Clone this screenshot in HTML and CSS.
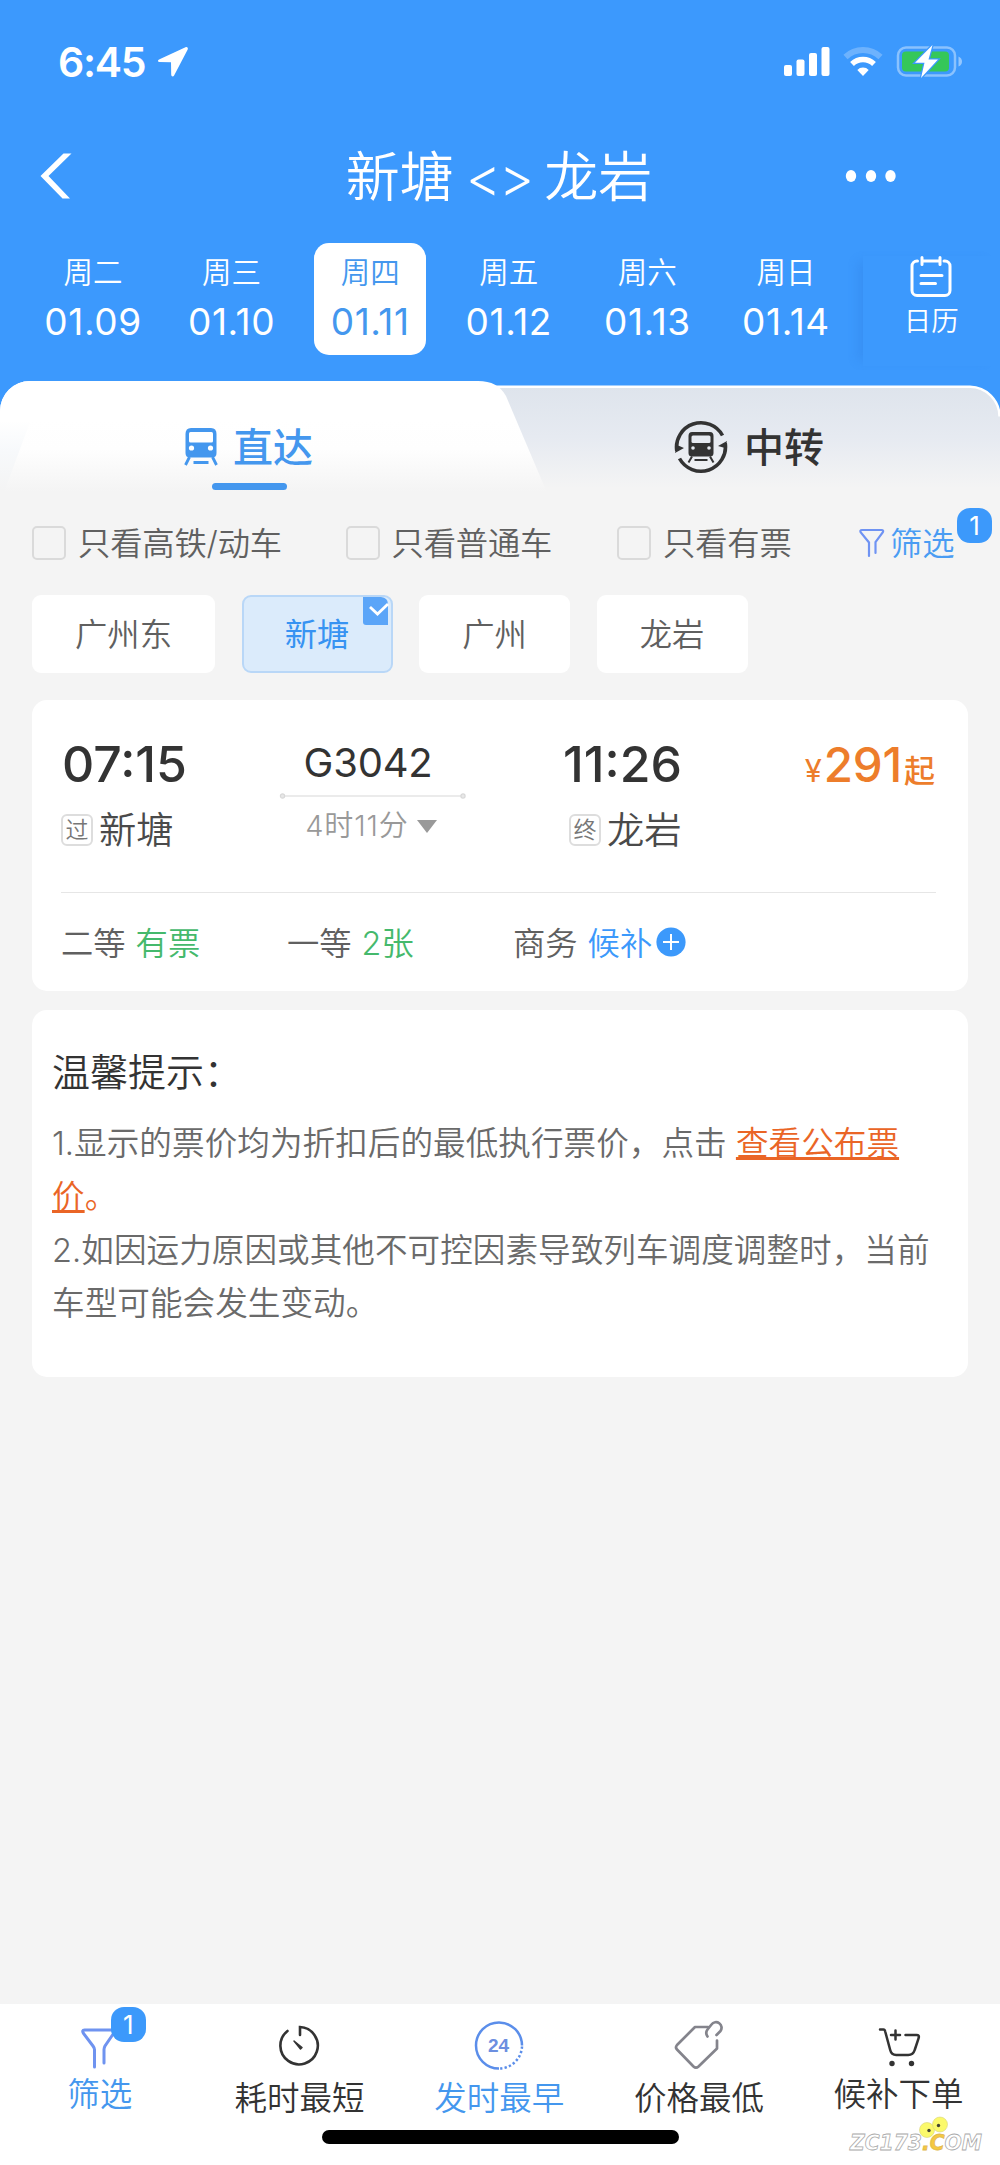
FILE: index.html
```html
<!DOCTYPE html>
<html lang="zh-CN">
<head>
<meta charset="utf-8">
<title>新塘 - 龙岩</title>
<link rel="stylesheet" href="styles.css">
</head>
<body>
<div class="page">
  <header class="header">
    <div class="status">
      <span class="clock">6:45</span>
      <svg class="location" width="32" height="32" viewBox="0 0 32 32"><path d="M28.500 1.200 2 13.400c-1.600.8-1.200 2.400.4 2.500l11.600.3.200 12.300c0 2 2 2.600 2.900.9L30.700 3.400c.7-1.600-.6-2.900-2.200-2.200z" fill="#fff"/></svg>
      <svg class="signals" width="180" height="34" viewBox="0 0 180 34">
        <g fill="#fff">
          <rect x="0" y="20" width="8" height="11" rx="2"/><rect x="12.500" y="14.500" width="8" height="16.500" rx="2"/><rect x="25" y="8" width="8" height="23" rx="2"/><rect x="37.500" y="2" width="8" height="29" rx="2"/>
          <path d="M79 31l-5.700-6a8 8 0 0 1 11.400 0z"/>
        </g>
        <path d="M68 19a16 16 0 0 1 22 0" fill="none" stroke="#fff" stroke-width="5.500"/>
        <path d="M61.500 12a25.500 25.500 0 0 1 35 0" fill="none" stroke="#fff" stroke-opacity=".25" stroke-width="6"/>
        <rect x="114" y="2.500" width="57" height="28" rx="8" fill="none" stroke="#fff" stroke-opacity=".4" stroke-width="2.500"/>
        <path d="M174.500 11.500q3.500 1.500 3.500 5t-3.500 5z" fill="#fff" fill-opacity=".45"/>
        <rect x="118" y="6.500" width="47" height="20" rx="4" fill="#35c759"/>
        <path d="M148.500 0 131 17.800h9.500L137 33l17-18.400h-9.500z" fill="#fff" stroke="#3c99fd" stroke-width="2.500" paint-order="stroke"/>
      </svg>
    </div>
    <div class="nav">
      <svg class="back" width="32" height="48" viewBox="0 0 32 48"><path d="M31.500 1.500h-8L.5 24l22 22.500H30L8.500 24z" fill="#fff"/></svg>
      <h1 class="title"><span>新塘</span><span class="swap">&lt;&gt;</span><span>龙岩</span></h1>
      <svg class="more" width="52" height="14" viewBox="0 0 52 14" fill="#fff"><ellipse cx="6" cy="7" rx="5.200" ry="6"/><ellipse cx="26" cy="7" rx="5.200" ry="6"/><ellipse cx="45.500" cy="7" rx="5.200" ry="6"/></svg>
    </div>
    <div class="dates">
      <div class="day"><span class="week">周二</span><span class="date">01.09</span></div>
      <div class="day"><span class="week">周三</span><span class="date">01.10</span></div>
      <div class="day active"><span class="week">周四</span><span class="date">01.11</span></div>
      <div class="day"><span class="week">周五</span><span class="date">01.12</span></div>
      <div class="day"><span class="week">周六</span><span class="date">01.13</span></div>
      <div class="day"><span class="week">周日</span><span class="date">01.14</span></div>
      <div class="calendar">
        <svg width="42" height="42" viewBox="0 0 42 42" fill="none" stroke="#fff" stroke-width="3" stroke-linecap="round"><path d="M7.500 5H7a5 5 0 0 0-5 5v24.500a5 5 0 0 0 5 5h28a5 5 0 0 0 5-5V10a5 5 0 0 0-5-5h-1M12 5h18M12 1.500v7M30 1.500v7M11 19.500h21M11 27.500h14.500"/></svg>
        <span>日历</span>
      </div>
    </div>
  </header>

  <div class="tabs">
    <svg class="tabs-shape" width="1000" height="125" viewBox="0 0 1000 125">
      <defs>
        <linearGradient id="gray" x1="0" y1="16" x2="0" y2="118" gradientUnits="userSpaceOnUse"><stop offset="0" stop-color="#dee4ec"/><stop offset=".5" stop-color="#e6eaf1"/><stop offset="1" stop-color="#f4f4f4"/></linearGradient>
        <linearGradient id="white" x1="0" y1="50" x2="0" y2="122" gradientUnits="userSpaceOnUse"><stop offset="0" stop-color="#fff"/><stop offset=".4" stop-color="#fefefe"/><stop offset="1" stop-color="#f4f4f4"/></linearGradient>
        <linearGradient id="edge" x1="0" y1="50" x2="0" y2="120" gradientUnits="userSpaceOnUse"><stop offset="0" stop-color="#fff"/><stop offset=".45" stop-color="#f7f9fb"/><stop offset="1" stop-color="#f4f4f4"/></linearGradient>
      </defs>
      <path d="M460 16.500h510a30 30 0 0 1 30 30V125H460z" fill="url(#gray)"/>
      <path d="M480 16.700h490a30 30 0 0 1 29.500 29.800" fill="none" stroke="#fff" stroke-width="2.400"/>
      <path d="M0 41a30 30 0 0 1 30-30h400v114H0z" fill="url(#edge)"/>
      <path d="M0 41a30 30 0 0 1 30-30h448q20 0 28 15l42 99H3l27-73H0z" fill="url(#white)"/>
    </svg>
    <div class="tab-row">
      <div class="tab direct">
        <div class="tab-label">
          <svg width="34" height="40" viewBox="0 0 34 40"><path d="M7 1h20q5.500 0 5.500 6v19q0 4.500-4.500 4.500H6q-4.500 0-4.500-4.500V7Q1.500 1 7 1z" fill="#4497ee"/><rect x="5" y="5" width="24" height="10.500" rx="1.500" fill="#fff"/><circle cx="7.500" cy="21" r="2.600" fill="#fff"/><circle cx="26.500" cy="21" r="2.600" fill="#fff"/><path d="M5.500 30 1.500 38M28.500 30l4 8M9.500 35.500h15" stroke="#4497ee" stroke-width="2.800" fill="none"/></svg>
          <span>直达</span>
        </div>
        <div class="underline"></div>
      </div>
      <div class="tab transfer">
        <div class="tab-label">
          <svg width="54" height="54" viewBox="0 0 54 54"><g fill="none" stroke="#333" stroke-width="3.600"><path d="M2.800 31A24.500 24.500 0 0 1 48.500 15.500M51.200 23A24.500 24.500 0 0 1 5.500 38.500"/></g><path d="M1 33l2-8 7 3zM53 21l-2 7-7-2z" fill="#333"/><path d="M18 12h18q3.500 0 3.500 4v17q0 3.500-3.500 3.500H18q-3.500 0-3.500-3.500V16q0-4 3.500-4z" fill="#333"/><rect x="17.500" y="15.500" width="19" height="7.500" rx="1.500" fill="#e6eaf1"/><circle cx="19" cy="28" r="1.800" fill="#e6eaf1"/><circle cx="35" cy="28" r="1.800" fill="#e6eaf1"/><path d="M18 36.500l-3.500 6M36 36.500l3.500 6M20.500 40h13" stroke="#333" stroke-width="2" fill="none"/></svg>
          <span>中转</span>
        </div>
      </div>
    </div>
  </div>

  <div class="filters">
    <label class="check"><i class="box"></i><span>只看高铁/动车</span></label>
    <label class="check c2"><i class="box"></i><span>只看普通车</span></label>
    <label class="check c3"><i class="box"></i><span>只看有票</span></label>
    <div class="filter-btn">
      <svg width="26" height="30" viewBox="0 0 26 30" fill="none" stroke="#6f93f3" stroke-width="2.200" stroke-linecap="round"><path d="M10 28V14.500L1.800 4.500Q.5 2 3 2h19.500q2.500 0 1.200 2.500L16.500 14v11"/></svg>
      <span>筛选</span><b class="badge">1</b>
    </div>
  </div>

  <div class="chips">
    <div class="chip wide">广州东</div>
    <div class="chip on">新塘
      <svg class="tick" width="26" height="28" viewBox="0 0 26 28"><path d="M3 0h15q7 1 7 7v21H3q-3 0-3-3V0z" fill="#5ba5f8"/><path d="M7 10l7.500 7L25 7" fill="none" stroke="#fff" stroke-width="2.800"/></svg>
    </div>
    <div class="chip">广州</div>
    <div class="chip">龙岩</div>
  </div>

  <section class="card train">
    <div class="trip">
      <div class="stop from">
        <div class="time">07:15</div>
        <div class="station"><i class="mark">过</i>新塘</div>
      </div>
      <div class="middle">
        <div class="number">G3042</div>
        <svg width="188" height="6" viewBox="0 0 188 6" fill="#e8e8e8" stroke="#d8d8d8" stroke-width="1.200"><path d="M5 3h178"/><circle cx="3.500" cy="3" r="2.100"/><circle cx="184" cy="3" r="2.100"/></svg>
        <div class="duration">4时11分<i class="caret"></i></div>
      </div>
      <div class="stop to">
        <div class="time">11:26</div>
        <div class="station"><i class="mark">终</i>龙岩</div>
      </div>
      <div class="price"><span class="yen">¥</span><span class="amount">291</span><span class="from-word">起</span></div>
    </div>
    <div class="seats">
      <div class="seat">二等<span class="ok">有票</span></div>
      <div class="seat">一等<span class="ok">2张</span></div>
      <div class="seat">商务<span class="wait">候补</span>
        <svg width="30" height="30" viewBox="0 0 30 30"><circle cx="15" cy="15" r="14.600" fill="#3c99fb"/><path d="M15 7v16M7 15h16" stroke="#fff" stroke-width="2"/></svg>
      </div>
    </div>
  </section>

  <section class="card tips">
    <h2>温馨提示：</h2>
    <p>1.显示的票价均为折扣后的最低执行票价，点击 <a>查看公布票</a><br><a>价</a><span class="stopmark">。</span></p>
    <p>2.如因运力原因或其他不可控因素导致列车调度调整时，当前<br>车型可能会发生变动。</p>
  </section>

  <footer class="bottom">
    <div class="tool sel up">
      <div class="icon-wrap">
        <svg width="36" height="44" viewBox="0 0 36 44" fill="none" stroke="#6f93f0" stroke-width="3" stroke-linecap="round"><path d="M13.500 41V23.500Q13.500 22 12 20L2.500 7.500Q.5 4 3.500 4h28q3 0 1 3.500L24 20q-1 2-1 3.500V37"/></svg>
        <b class="badge">1</b>
      </div>
      <span>筛选</span>
    </div>
    <div class="tool">
      <svg class="lift" width="44" height="44" viewBox="0 0 44 44" fill="none" stroke="#333" stroke-width="2.600"><path d="M9.500 8A18.700 18.700 0 1 0 22 4v8" stroke-linecap="round"/><path d="M16 18l8 6.500-1.500 1.500z" fill="#333" stroke-width="1.500" stroke-linejoin="round"/></svg>
      <span>耗时最短</span>
    </div>
    <div class="tool sel">
      <svg class="lift-small" width="50" height="50" viewBox="0 0 50 50"><g fill="none" stroke="#5b8eea" stroke-width="2.500"><path d="M25 48.500A23 23 0 1 1 48 25.500"/><path d="M48 26.500A23 23 0 0 1 26 48.500" stroke-dasharray="2.300 2.200"/></g><text x="24.500" y="32" text-anchor="middle" class="n24">24</text></svg>
      <span>发时最早</span>
    </div>
    <div class="tool">
      <svg class="lift-small" width="50" height="50" viewBox="0 0 50 50" fill="none" stroke="#84848c" stroke-width="2.700" stroke-linecap="round" stroke-linejoin="round"><path d="M34 7H21L3 25q-2 2.500 0 4.500L19.500 46.500q2.500 2.300 5 0L43 28.500V20.500"/><path d="M33.500 16.500q-2.500-3.500 0-7l4-5a5.500 5.500 0 0 1 9 6.500l-4 4"/></svg>
      <span>价格最低</span>
    </div>
    <div class="tool up">
      <svg class="cart" width="44" height="42" viewBox="0 0 44 42" fill="none" stroke="#333" stroke-width="2.500" stroke-linecap="round"><path d="M2 3.500h3.500q1.300 0 1.700 2l5 18.500q1.200 5 6 5h12q5 0 6.500-5l4-12q.8-3-2-3H27.500M13 9h9M17.500 4.500v9"/><g fill="#333" stroke="none"><circle cx="14" cy="37.500" r="2.700"/><circle cx="33.500" cy="37.500" r="2.700"/></g></svg>
      <span>候补下单</span>
    </div>
    <div class="home-bar"></div>
    <svg class="site" width="140" height="40" viewBox="0 0 140 40">
      <text x="2" y="34" class="site-text" textLength="132" lengthAdjust="spacingAndGlyphs">ZC173<tspan class="gold">.C</tspan>OM</text>
      <circle cx="79" cy="14" r="7.500" fill="#fbf96b" stroke="#d8d47a" stroke-width=".6"/><circle cx="92" cy="8.500" r="7.500" fill="#fbf96b" stroke="#d8d47a" stroke-width=".6"/>
      <circle cx="81" cy="14.500" r="1.700" fill="#443"/><circle cx="90.500" cy="9.500" r="1.700" fill="#443"/>
    </svg>
  </footer>
</div>
</body>
</html>
```
FILE: styles.css
```css
* { box-sizing: border-box; }
body {
  margin: 0;
  background: #f4f4f4;
  font-family: Inter, "Noto Sans CJK SC", sans-serif;
  font-weight: 350;
  color: #333;
}
i { font-style: normal; }
svg { display: block; flex: none; }
.page { width: 1000px; height: 2165px; display: flex; flex-direction: column; overflow: hidden; }

/* blue header */
.header { height: 370px; background: #3c99fd; color: #fff; flex: none; }
.status { height: 123px; display: flex; align-items: center; padding: 0 36px 0 58px; }
.clock { font-size: 41px; font-weight: 600; line-height: 50px; letter-spacing: -1.300px; width: 99px; }
.signals { margin-left: auto; }
.nav { height: 107px; display: flex; align-items: center; padding: 0 103px 2px 40px; justify-content: space-between; }
.title { margin: 4px 0 0 81px; display: flex; align-items: center; font-size: 54px; line-height: 60px; font-weight: 350; gap: 12px; }
.swap { font-size: 54px; line-height: 60px; font-weight: 300; letter-spacing: -2px; font-feature-settings: "calt" 0; }
.dates { display: flex; height: 140px; padding-left: 37px; align-items: flex-start; }
.day { width: 112px; height: 112px; margin: 13px 26.600px 0 0; padding-top: 9px; border-radius: 15px; display: flex; flex-direction: column; align-items: center; flex: none; }
.week { font-size: 29.500px; line-height: 40px; }
.date { font-size: 37px; line-height: 40px; font-weight: 420; margin-top: 10px; letter-spacing: 0.600px; }
.active { background: #fff; color: #4497ee; }
.calendar { flex: 1; display: flex; flex-direction: column; align-items: center; height: 110px; margin: 26px 0 0 -6px; font-size: 27.500px; line-height: 40px; box-shadow: -10px 0 10px -5px rgba(40,110,210,.2); }
.calendar span { margin-top: 3px; }

/* tab strip */
.tabs { display: grid; height: 125px; flex: none; background: #3c99fd; }
.tabs-shape, .tab-row { grid-area: 1 / 1; }
.tab-row { display: flex; position: relative; }
.tab { width: 500px; padding-top: 50px; font-size: 40px; font-weight: 500; line-height: 54px; }
.tab-label { display: flex; align-items: center; }
.tab-label span { padding-top: 1px; margin-bottom: -1px; }
.direct .tab-label { padding-left: 184px; gap: 15px; color: #4497ee; }
.transfer .tab-label { padding-left: 174px; gap: 16px; }
.underline { width: 75px; height: 7px; border-radius: 4px; background: #4497ee; margin: 9px 0 0 212px; }

/* quick filters */
.filters { display: flex; align-items: center; height: 100px; padding-left: 32px; font-size: 32.300px; line-height: 44px; color: #606060; flex: none; margin-top: -2px; }
.filters span { padding-top: 2px; }
.check { display: flex; align-items: center; width: 313.500px; letter-spacing: -0.150px; }
.check.c2 { width: 271.500px; }
.check.c3 { width: 242px; }
.box { width: 34px; height: 34px; border: 2px solid #dadada; border-radius: 5px; margin-right: 12px; }
.filter-btn { display: flex; align-items: center; color: #4a9cf3; position: relative; gap: 5px; }
.badge { position: absolute; width: 35px; height: 35px; border-radius: 13px; background: #3c99fb; color: #fff; font-size: 26px; font-weight: 400; line-height: 35px; text-align: center; }
.filter-btn .badge { left: 98px; top: -12px; }

.chips { display: flex; gap: 26.500px; padding: 2px 32px 0; height: 107px; flex: none; }
.chip { width: 151px; height: 78px; border-radius: 9px; background: #fff; color: #606060; font-size: 32.300px; line-height: 80px; text-align: center; position: relative; }
.chip.wide { width: 183px; }
.chip.on { background: #dbebfb; border: 2px solid #b9d7f7; color: #3793f2; line-height: 76px; font-weight: 400; }
.tick { position: absolute; right: 2px; top: 0; }

.card { margin: 0 32px; border-radius: 15px; background: #fff; flex: none; }
.train { height: 291px; padding: 0 32px 0 29px; }
.trip { display: flex; height: 193px; border-bottom: 1.500px solid #e6e6e6; }
.stop { width: 218px; }
.time { font-size: 50px; line-height: 60px; font-weight: 450; letter-spacing: 0; margin: 34px 0 0 1px; }
.station { display: flex; align-items: center; font-size: 37.300px; line-height: 46px; color: #4a4a4a; margin-top: 14px; }
.mark { width: 32px; height: 32px; border: 2px solid #ddd; border-radius: 6px; font-size: 23px; line-height: 29px; text-align: center; color: #777; margin: -3px 6px 0 0; }
.middle { width: 188px; display: flex; flex-direction: column; align-items: center; }
.number { font-size: 40px; line-height: 50px; margin: 38px 10px 0 0; font-weight: 400; letter-spacing: -0.200px; }
.middle svg { margin-top: 5px; }
.duration { display: flex; align-items: center; font-size: 29px; letter-spacing: 0.900px; line-height: 40px; margin: 7px 4px 0 0; color: #999; }
.caret { border: 10px solid transparent; border-top: 13px solid #999; border-bottom: 0; margin-left: 8px; }
.to { width: 200px; margin-left: 95px; }
.to .station { padding-left: 7px; }
.price { margin-left: auto; margin-right: 1px; color: #ed7d2b; display: flex; align-items: baseline; height: 60px; line-height: 60px; margin-top: 35px; font-weight: 400; }
.yen { font-size: 31px; }
.amount { font-size: 47.500px; font-weight: 450; letter-spacing: -0.200px; margin: 0 2px 0 2px; }
.from-word { font-size: 31px; font-weight: 500; }
.seats { display: flex; height: 98px; align-items: center; padding-top: 3px; font-size: 32.300px; color: #606060; }
.seat { width: 226px; display: flex; align-items: center; line-height: 44px; }
.seat span { margin-left: 10px; }
.seat svg { margin: -3px 0 0 4px; }
.ok { color: #45b96c; }
.wait { color: #3c99fb; }

.tips { margin-top: 19px; height: 367px; padding: 36px 0 0 20px; color: #6a6a6a; font-size: 32.600px; line-height: 53.400px; white-space: nowrap; }
.tips h2 { margin: 0 0 19px; font-size: 38px; line-height: 52px; font-weight: 350; color: #333; }
.tips p { margin: 0; letter-spacing: 0.050px; }
.tips a, .stopmark { color: #ea6526; }
.tips a { text-decoration: underline; text-decoration-thickness: 3px; text-underline-offset: 2px; text-decoration-skip-ink: none; }

/* sort toolbar */
.bottom { margin-top: auto; height: 161px; background: #fff; display: flex; position: relative; flex: none; font-size: 32.500px; line-height: 44px; }
.tool { width: 199.700px; display: flex; flex-direction: column; align-items: center; justify-content: flex-end; height: 117px; }
.tool.up { height: 113px; }
.lift { margin-bottom: 10px; }
.lift-small { margin-bottom: 7px; }
.cart { margin: 0 0 5px 2px; }
.sel { color: #4497ee; }
.icon-wrap { position: relative; margin: 0 0 3px -2px; }
.icon-wrap .badge { left: 30px; top: -19px; }
.n24 { font: 700 19px "Liberation Sans", sans-serif; fill: #6c8fe0; }
.home-bar { position: absolute; left: 322px; top: 126px; width: 357px; height: 14px; border-radius: 7px; background: #000; }
.site { position: absolute; left: 848px; top: 112px; }
.site-text { font: italic 700 21px "DejaVu Sans", sans-serif; fill: #fff; stroke: #aaa; stroke-width: .8px; }
.gold { fill: #f5c842; stroke: #e0b850; }
```
